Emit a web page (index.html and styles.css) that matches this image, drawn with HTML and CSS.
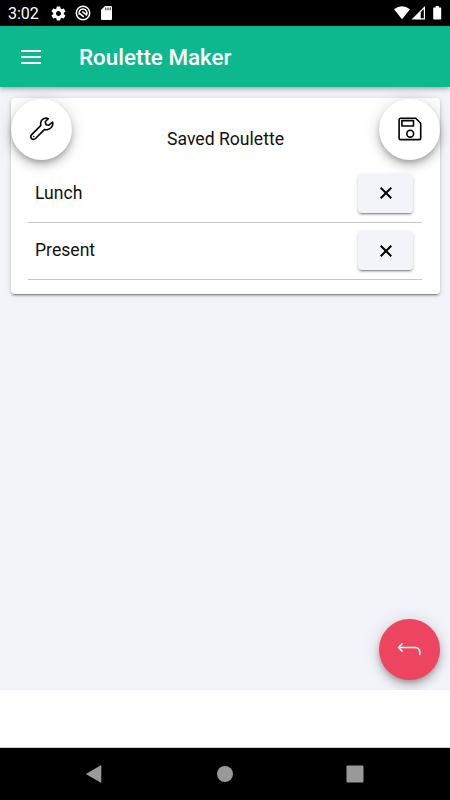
FILE: index.html
```html
<!DOCTYPE html>
<html lang="en">
<head>
    <meta charset="UTF-8">
    <meta name="viewport" content="width=device-width, initial-scale=1">
    <title>Roulette Maker</title>
    <link rel="stylesheet" href="styles.css">
</head>
<body>
    <div class="status-bar">
        <span class="clock">3:02</span>
        <svg class="status-icon gear" viewBox="0 0 24 24" width="17" height="17">
            <path fill="#fff" d="M19.43 12.98c.04-.32.07-.64.07-.98s-.03-.66-.07-.98l2.11-1.65c.19-.15.24-.42.12-.64l-2-3.46c-.12-.22-.39-.3-.61-.22l-2.49 1c-.52-.4-1.08-.73-1.69-.98l-.38-2.65C14.46 2.18 14.25 2 14 2h-4c-.25 0-.46.18-.49.42l-.38 2.65c-.61.25-1.17.59-1.69.98l-2.49-1c-.23-.09-.49 0-.61.22l-2 3.46c-.13.22-.07.49.12.64l2.11 1.65c-.04.32-.07.65-.07.98s.03.66.07.98l-2.11 1.65c-.19.15-.24.42-.12.64l2 3.46c.12.22.39.3.61.22l2.49-1c.52.4 1.08.73 1.69.98l.38 2.65c.03.24.24.42.49.42h4c.25 0 .46-.18.49-.42l.38-2.65c.61-.25 1.17-.59 1.69-.98l2.49 1c.23.09.49 0 .61-.22l2-3.46c.12-.22.07-.49-.12-.64l-2.11-1.65zM12 15.5c-1.93 0-3.5-1.57-3.5-3.5s1.57-3.5 3.5-3.5 3.5 1.57 3.5 3.5-1.57 3.5-3.5 3.5z"/>
        </svg>
        <svg class="status-icon" viewBox="0 0 16 16" width="16" height="16">
            <circle cx="8" cy="8" r="6.7" fill="none" stroke="#fff" stroke-width="1.5"/>
            <path d="M4.300 9.600A4 4 0 1 1 11.500 9.900L7.300 6.600M4.600 8.500l4.300 3.400" fill="none" stroke="#fff" stroke-width="1.6"/>
        </svg>
        <svg class="status-icon sd-card" viewBox="0 0 11 14" width="11" height="14">
            <path fill="#fff" d="M4 0h6q1 0 1 1v12q0 1-1 1H1q-1 0-1-1V4z"/>
            <path d="M4.800 1.500v2.700M7 1.500v2.700M9.200 1.500v2.700" stroke="#333" stroke-width="1.1"/>
        </svg>
        <div class="status-right">
            <svg viewBox="0 0 50 16" width="50" height="16">
                <path fill="#fff" d="M0 4.200Q8 -1.800 16 4.200L8 14.200z"/>
                <path fill="#fff" fill-rule="evenodd" d="M17.500 14.500L31 1v13.500zM26.700 7.200v6.100h3.100V4.100z"/>
                <path fill="#fff" d="M41.600 1h3.300v1.400h1.600q.7 0 .7.7v10.700q0 .7-.7.7h-6.600q-.7 0-.7-.7V3.100q0-.7.7-.7h1.700z"/>
            </svg>
        </div>
    </div>

    <header class="toolbar">
        <button class="menu-btn" aria-label="Menu">
            <span></span>
            <span></span>
            <span></span>
        </button>
        <h1>Roulette Maker</h1>
    </header>

    <main class="content">
        <div class="card">
            <h2>Saved Roulette</h2>
            <ul class="roulette-list">
                <li>
                    <span>Lunch</span>
                    <button class="delete-btn" aria-label="Delete">
                        <svg viewBox="0 0 12 12" width="12" height="12"><path d="M.7.700l10.600 10.600M11.300.700L.7 11.300"/></svg>
                    </button>
                </li>
                <li>
                    <span>Present</span>
                    <button class="delete-btn" aria-label="Delete">
                        <svg viewBox="0 0 12 12" width="12" height="12"><path d="M.7.700l10.600 10.600M11.300.700L.7 11.300"/></svg>
                    </button>
                </li>
            </ul>
        </div>

        <!-- floating buttons -->
        <button class="fab fab-edit" aria-label="Edit">
            <svg viewBox="0 0 24 24" width="24" height="24">
                <path d="M18.300 1.700C15.200.2 11.300 2.200 10.700 5.600c-.2.900-.1 1.900.2 2.800L1.700 17.600c-1.200 1.100-1.200 2.900-.1 4s2.800 1 3.900-.1l9.100-9.100c1 .3 2.100.4 3.200.1 3.600-.8 5.700-4.400 4.700-7.500l-3.600 3.200-2.800-.4-.9-3.100z"/>
                <circle class="dot" cx="3.800" cy="19.500" r=".8"/>
            </svg>
        </button>
        <button class="fab fab-save" aria-label="Save">
            <svg viewBox="0 0 24 24" width="24" height="24">
                <path d="M2.800 1.300h14.900l5 5v14.600q0 1.700-1.700 1.700H2.800q-1.700 0-1.700-1.700V3q0-1.700 1.700-1.700z"/>
                <path d="M3.900 3.600h11.600v5.400H3.900z"/>
                <circle cx="12.200" cy="16.700" r="3.400"/>
            </svg>
        </button>
        <button class="fab fab-back" aria-label="Back">
            <svg viewBox="0 0 24 14" width="24" height="14">
                <path d="M5.200 1.700L1.500 5.500l3.700 3.800M1.700 5.500h16.100q5 0 5 5V12.500"/>
            </svg>
        </button>
    </main>

    <div class="ad-banner"></div>

    <nav class="nav-bar">
        <svg viewBox="0 0 18 20" width="18" height="20"><path d="M.8 10L16.300 1V19z"/></svg>
        <svg viewBox="0 0 18 18" width="18" height="18"><circle cx="9" cy="9" r="8"/></svg>
        <svg viewBox="0 0 18 18" width="18" height="18"><rect x=".5" y=".5" width="17" height="17" rx="1"/></svg>
    </nav>
</body>
</html>
```
FILE: styles.css
```css
* {
    box-sizing: border-box;
}
body {
    margin: 0;
    height: 100vh;
    display: flex;
    flex-direction: column;
    overflow: hidden;
    font-family: Roboto, "Liberation Sans", sans-serif;
    color: #111;
    background: #fff;
}
button {
    padding: 0;
    border: none;
    cursor: pointer;
}
.status-bar {
    height: 26px;
    flex: none;
    display: flex;
    align-items: center;
    padding: 0 6px 0 8px;
    background: #000;
    color: #fff;
}
.clock {
    width: 42px;
    font-size: 16px;
    line-height: 20px;
    padding-top: 2px;
}
.status-icon {
    margin-right: 8px;
}
.status-icon.sd-card {
    margin: 0 0 0 2px;
}
.status-right {
    margin-left: auto;
    height: 16px;
}
.toolbar {
    position: relative;
    z-index: 2;
    height: 61px;
    flex: none;
    display: flex;
    align-items: center;
    padding-left: 21px;
    background: #0eb88f;
    color: #fff;
    box-shadow: 0 2px 4px rgba(0, 0, 0, 0.25), 0 1px 9px rgba(0, 0, 0, 0.1);
}
.menu-btn {
    width: 20px;
    height: 14px;
    display: flex;
    flex-direction: column;
    justify-content: space-between;
    background: none;
}
.menu-btn span {
    height: 2px;
    background: #fff;
}
h1 {
    margin: 0 0 0 38px;
    font-size: 22.4px;
    font-weight: 500;
    line-height: 28px;
}
.content {
    position: relative;
    height: 603px;
    flex: none;
    padding: 11px 10px 0 11px;
    background: #f3f4f9;
    overflow: hidden;
}
.card {
    height: 196px;
    padding: 29px 17px 0 17px;
    background: #fff;
    border-radius: 4px;
    box-shadow: 0 3px 1px -2px rgba(0, 0, 0, 0.28), 0 2px 2px rgba(0, 0, 0, 0.16), 0 1px 5px rgba(0, 0, 0, 0.15);
}
h2 {
    margin: 0;
    text-align: center;
    font-size: 17.6px;
    font-weight: 400;
    line-height: 24px;
}
.roulette-list {
    list-style: none;
    margin: 14px 1px 0 0;
    padding: 0;
}
.roulette-list li {
    height: 57px;
    display: flex;
    align-items: center;
    justify-content: space-between;
    padding: 0 9px 1px 7px;
    border-bottom: 1px solid #c6c6c6;
    font-size: 17.6px;
}
.roulette-list li:first-child {
    height: 58px;
}
.roulette-list span {
    padding-bottom: 1px;
}
.delete-btn {
    width: 55px;
    height: 39px;
    display: flex;
    align-items: center;
    justify-content: center;
    background: #f3f4f9;
    border-radius: 4px;
    box-shadow: 0 3px 1px -2px rgba(0, 0, 0, 0.26), 0 2px 2px rgba(0, 0, 0, 0.16), 0 1px 4px rgba(0, 0, 0, 0.12);
}
.delete-btn svg {
    fill: none;
    stroke: #000;
    stroke-width: 2;
}
.fab {
    position: absolute;
    width: 61px;
    height: 61px;
    display: flex;
    align-items: center;
    justify-content: center;
    background: #fff;
    border-radius: 50%;
    box-shadow: 0 3px 5px -1px rgba(0, 0, 0, 0.22), 0 6px 10px rgba(0, 0, 0, 0.16), 0 1px 18px rgba(0, 0, 0, 0.13);
}
.fab svg {
    fill: none;
    stroke: #000;
    stroke-width: 1.6;
    stroke-linejoin: round;
    stroke-linecap: round;
}
.fab .dot {
    fill: #000;
    stroke: none;
}
.fab-edit {
    top: 11.5px;
    left: 11px;
}
.fab-save {
    top: 11.5px;
    right: 10px;
}
.fab-back {
    right: 10px;
    bottom: 10.5px;
    background: #ed4560;
}
.fab-back svg {
    margin-right: 1px;
    stroke: #fff;
}
.ad-banner {
    flex: 1;
    border-bottom: 1px solid #ccc;
}
.nav-bar {
    height: 52px;
    flex: none;
    display: flex;
    align-items: center;
    justify-content: space-between;
    padding: 0 86px 0 85px;
    background: #000;
}
.nav-bar svg {
    fill: #999;
}
```
